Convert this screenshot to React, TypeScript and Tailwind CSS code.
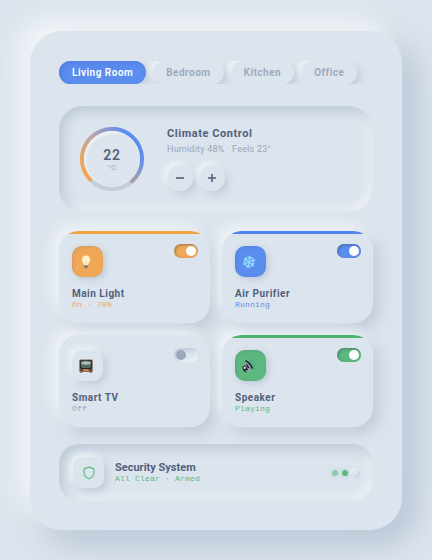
import { useState } from "react";

const RAISED = "shadow-[-6px_-6px_14px_rgba(255,255,255,0.6),6px_6px_14px_rgba(163,180,200,0.5)]";
const RAISED_SM = "shadow-[-3px_-3px_6px_rgba(255,255,255,0.6),3px_3px_7px_rgba(163,180,200,0.5)]";
const INSET = "shadow-[inset_4px_4px_12px_rgba(163,180,200,0.6),inset_-4px_-4px_10px_rgba(255,255,255,0.6)]";
const STATUS = "font-['Liberation_Mono',monospace] text-[8px] leading-[10px] tracking-wide";

interface Device {
  name: string;
  status: string;
  on: boolean;
  icon: React.ReactNode;
  bar: string;
  fill: string;
  text: string;
}

function Bulb() {
  return (
    <svg viewBox="0 0 14 14" className="size-[14px]">
      <path d="M7 .4a4.200 4.200 0 0 0-4.200 4.200c0 2 1.700 3.200 2.200 5.600h4c.5-2.400 2.200-3.600 2.200-5.600A4.200 4.200 0 0 0 7 .4z" fill="#fff3cc" />
      <path d="M6.200 6 6.700 10h.7l.5-4-.9.600z" fill="#fbdc8c" />
      <path d="M5.300 10h3.400v2l-.8 1.500H6.100L5.300 12z" fill="#9a9690" />
      <path d="M5.300 11.100h3.400M5.500 12.300h3" stroke="#5d5a58" strokeWidth="0.6" />
    </svg>
  );
}

function Snowflake() {
  return (
    <svg viewBox="0 0 16 16" className="size-[14px]" fill="none" stroke="#8fdcff" strokeWidth="1.5" strokeLinecap="round">
      {[10, 70, 130, 190, 250, 310].map((angle) => (
        <path key={angle} transform={`rotate(${angle} 8 8)`} d="M8 8V1.200M8 4.400 6 2.600M8 4.400 10 2.600" />
      ))}
    </svg>
  );
}

function Television() {
  return (
    <svg viewBox="0 0 14 14" className="size-[14px]">
      <rect x="0.200" y="0.600" width="13.600" height="12.400" rx="1.200" fill="#8d6a55" />
      <rect x="1" y="1" width="12" height="9" rx="1.500" fill="#27231f" />
      <path d="M1.800 3.200Q2 1.900 3.300 1.800 7 1.400 10.700 1.800 12 1.900 12.200 3.200v4.300q-.2 1.300-1.500 1.400-3.700.4-7.400 0Q2 8.800 1.800 7.500z" fill="#4f6866" />
      <path d="M2.300 3.200Q7 1.300 11.700 3.200V5Q7 6.400 2.300 5z" fill="#a9bdba" />
      <path d="M1.200 10.500h2.600v1.600H1.200zM10.200 10.500h2.600v1.600h-2.600z" fill="#4a332a" />
      <path d="M4.600 10.600h4.800V12H4.600z" fill="#c98d6d" />
      <path d="M1.400 13h1.800v.700H1.400zM10.800 13h1.800v.700h-1.800z" fill="#4d392e" />
    </svg>
  );
}

function SpeakerIcon() {
  return (
    <svg viewBox="0 0 14 14" className="size-[14px]">
      <path d="M.4 8 2.800 6l4.200 5-2.400 2.200q-1.800.300-3-1.200T.4 8z" fill="#24262b" />
      <path d="M2.800 6.200 3.600 1.600Q8 3.800 10.600 9.600L6.600 11z" fill="#8f9cb0" />
      <path d="M3.600 1.600Q8 3.800 10.600 9.600" fill="none" stroke="#17181d" strokeWidth="1.400" />
      <path d="M3.900 4.200Q6.500 6 7.700 9.200L5 8.400z" fill="#202229" />
      <circle cx="2.600" cy="8.900" r="1.100" fill="#e6ebf3" />
      <path d="M3.600 12.200 6.800 11.400" stroke="#e5e9ef" strokeWidth="0.900" />
      <path d="M7.300 1.800q3.500 1.800 4.600 5.600M9 .6q3.400 2.200 4.500 6" fill="none" stroke="#46a583" strokeWidth="0.900" strokeLinecap="round" />
    </svg>
  );
}

const devices: Device[] = [
  { name: "Main Light", status: "On · 70%", on: true, icon: <Bulb />, bar: "bg-[#f2a143]", fill: "bg-[#f0a856]", text: "text-[#f0a856]" },
  { name: "Air Purifier", status: "Running", on: true, icon: <Snowflake />, bar: "bg-[#4f83ee]", fill: "bg-[#5b8def]", text: "text-[#5b8def]" },
  { name: "Smart TV", status: "Off", on: false, icon: <Television />, bar: "", fill: "bg-[#dce4ed]", text: "text-[#98a5ba]" },
  { name: "Speaker", status: "Playing", on: true, icon: <SpeakerIcon />, bar: "bg-[#4fb070]", fill: "bg-[#5cb87e]", text: "text-[#5cb87e]" },
];

const rooms = ["Living Room", "Bedroom", "Kitchen", "Office"];

function DeviceCard({ device }: { device: Device }) {
  const [on, setOn] = useState(device.on);
  return (
    <div className={`rounded-[20px] ${RAISED}`}>
      <div className="relative h-full overflow-hidden rounded-[20px] bg-[#dce4ed] px-[13px] pt-[15px] pb-[13px]">
        {on && <div className={`absolute inset-x-0 top-0 h-[3px] ${device.bar}`} />}
        <div className="flex items-start justify-between">
          <div
            className={`flex size-[31px] items-center justify-center rounded-[10px] pr-[3px] ${
              on
                ? `${device.fill} shadow-[inset_1px_1px_3px_rgba(80,90,140,0.2),2px_2px_6px_rgba(163,180,200,0.6)]`
                : `bg-[#dce4ed] ${RAISED_SM}`
            }`}
          >
            {device.icon}
          </div>
          <label className="-mt-0.5 -mr-px flex">
            <input type="checkbox" className="peer sr-only" checked={on} onChange={() => setOn(!on)} aria-label={device.name} />
            <span
              className={`flex h-[14px] w-6 items-center rounded-full px-0.5 ${
                on
                  ? `justify-end ${device.fill} shadow-[inset_1px_1px_3px_rgba(50,60,90,0.45)]`
                  : "justify-start bg-[#dce4ed] shadow-[inset_2px_2px_4px_rgba(163,180,200,0.6),inset_-2px_-2px_3px_rgba(255,255,255,0.6)]"
              }`}
            >
              <span className={`size-[10px] rounded-full ${on ? "bg-white" : "bg-[#9aa7bb]"}`} />
            </span>
          </label>
        </div>
        <h3 className="mt-[10px] text-[10px] leading-[13px] font-bold tracking-wider">{device.name}</h3>
        <p className={`${STATUS} ${device.text}`}>{device.status}</p>
      </div>
    </div>
  );
}

export default function App() {
  const [room, setRoom] = useState("Living Room");
  const [temp, setTemp] = useState(22);

  return (
    <div className="min-h-screen bg-[#dce4ed] px-[30px] pt-[31px] pb-[30px] font-[Roboto,sans-serif] text-[#52617c]">
      <main className="rounded-[32px] bg-[#dce4ed] px-[29px] pt-[30px] pb-[29px] shadow-[-12px_-12px_26px_rgba(255,255,255,0.7),12px_12px_32px_rgba(163,180,200,0.75)]">
        {/* Rooms */}
        <nav className="flex gap-[7px] overflow-hidden">
          {rooms.map((name) => (
            <button
              key={name}
              onClick={() => setRoom(name)}
              className={`shrink-0 rounded-full px-[13px] py-1 text-[10px] leading-[15px] font-semibold tracking-wider ${
                room === name
                  ? "bg-[#5b8def] text-white shadow-[inset_2px_2px_5px_rgba(70,110,210,0.5),3px_3px_8px_rgba(163,180,200,0.4)]"
                  : `bg-[#dce4ed] text-[#9aa7bb] ${RAISED_SM}`
              }`}
            >
              {name}
            </button>
          ))}
        </nav>

        {/* Climate */}
        <section className={`mt-[22px] flex gap-[23px] rounded-[24px] p-[21px] ${INSET}`}>
          <div className="grid size-16 shrink-0 place-items-center">
            <svg viewBox="0 0 64 64" className="col-start-1 row-start-1 size-16" fill="none">
              <defs>
                <linearGradient id="dial" x1="4" y1="44" x2="50" y2="10" gradientUnits="userSpaceOnUse">
                  <stop offset="0" stopColor="#f5a64a" />
                  <stop offset="0.5" stopColor="#b5a6ad" />
                  <stop offset="1" stopColor="#5b8def" />
                </linearGradient>
                <linearGradient id="tail" x1="0" y1="32" x2="0" y2="56" gradientUnits="userSpaceOnUse">
                  <stop offset="0" stopColor="#5b8def" />
                  <stop offset="1" stopColor="#b0a0a8" />
                </linearGradient>
              </defs>
              <circle cx="32" cy="32" r="30" stroke="#c2cdd9" strokeWidth="4" />
              <path d="M10 52.400A30 30 0 1 1 62 32" stroke="url(#dial)" strokeWidth="4" strokeLinecap="round" />
              <path d="M62 32A30 30 0 0 1 52 54.300" stroke="url(#tail)" strokeWidth="4" strokeLinecap="round" />
            </svg>
            <div className="col-start-1 row-start-1 flex size-[56px] flex-col items-center justify-center rounded-full bg-[#dce4ed] shadow-[inset_2px_2px_3px_rgba(255,255,255,0.5)]">
              <span className="text-[14px] leading-4 font-semibold tracking-wider">{temp}</span>
              <span className="text-[8px] leading-[9px] tracking-wider text-[#9aa7bb]">°C</span>
            </div>
          </div>
          <div>
            <h2 className="text-[11px] leading-[14px] font-bold tracking-wider">Climate Control</h2>
            <p className="mt-0.5 text-[9px] leading-3 tracking-wide text-[#9aa7bb]">Humidity 48% · Feels 23°</p>
            <div className="mt-[10px] flex gap-[6px]">
              <button
                aria-label="Cooler"
                onClick={() => setTemp(temp - 1)}
                className={`flex size-[26px] items-center justify-center rounded-full bg-[#dce4ed] ${RAISED_SM}`}
              >
                <svg viewBox="0 0 8 8" className="size-2" stroke="currentColor" strokeWidth="1.600"><path d="M0 4h8" /></svg>
              </button>
              <button
                aria-label="Warmer"
                onClick={() => setTemp(temp + 1)}
                className={`flex size-[26px] items-center justify-center rounded-full bg-[#dce4ed] ${RAISED_SM}`}
              >
                <svg viewBox="0 0 8 8" className="size-2" stroke="currentColor" strokeWidth="1.600"><path d="M0 4h8M4 0v8" /></svg>
              </button>
            </div>
          </div>
        </section>

        {/* Devices */}
        <section className="mt-[19px] grid grid-cols-2 gap-3">
          {devices.map((device) => (
            <DeviceCard key={device.name} device={device} />
          ))}
        </section>

        {/* Security */}
        <section className={`mt-[17px] flex items-center rounded-[20px] py-[13px] pr-[15px] pl-[14px] ${INSET}`}>
          <div className={`flex size-[31px] items-center justify-center rounded-[10px] bg-[#dce4ed] ${RAISED_SM}`}>
            <svg viewBox="0 0 24 24" className="size-[14px]" fill="none" stroke="#5cb87e" strokeWidth="2" strokeLinejoin="round">
              <path d="M12 22s8.500-4 8.500-10V5L12 2 3.500 5v7c0 6 8.500 10 8.500 10z" />
            </svg>
          </div>
          <div className="ml-[11px]">
            <h2 className="text-[11px] leading-[13px] font-bold">Security System</h2>
            <p className={`${STATUS} text-[#5cb87e]`}>All Clear · Armed</p>
          </div>
          <div className="ml-auto flex gap-1">
            <span className="size-[6px] rounded-full bg-[#5cb87e]/60 shadow-[0_0_4px_rgba(92,184,126,0.3)]" />
            <span className="size-[6px] rounded-full bg-[#5cb87e] shadow-[0_0_4px_rgba(92,184,126,0.4)]" />
            <span className="size-[6px] rounded-full bg-[#dce4ed] shadow-[-1px_-1px_2px_#f2f5f9,1px_1px_2px_#b9c6d5]" />
          </div>
        </section>
      </main>
    </div>
  );
}
